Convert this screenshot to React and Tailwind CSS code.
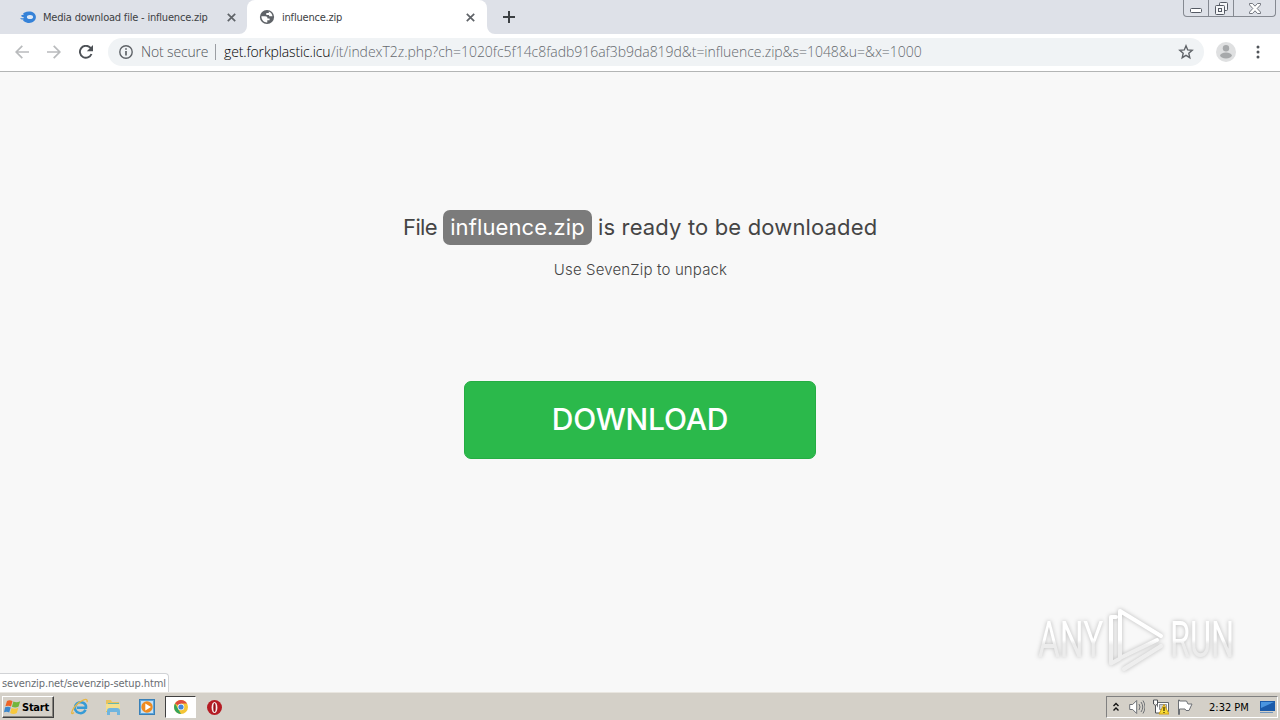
import React from 'react';

function TabClose() {
  return (
    <svg className="h-[9px] w-[9px] shrink-0" viewBox="0 0 9 9" fill="none" stroke="#5f6368" strokeWidth="1.7">
      <path d="M.8.8l7.4 7.4M8.2.8L.8 8.2" />
    </svg>
  );
}

function TabStrip() {
  return (
    <header className="relative flex h-[34px] bg-[#dee1e8]">
      <div className="flex h-full w-[247px] items-center pl-5">
        <svg className="h-4 w-4 shrink-0" viewBox="0 0 16 16">
          <path d="M.3 8.900c1.500.6 3 .4 4-.2L1.600 7.500C.9 6.800 1.200 6 2 5.900l2-.1c-1.200-.4-1-1.500.1-2C9 .9 15.900 2.800 15.900 8.100c0 5.600-7.300 7.600-12 4.100-1-.6-.9-1.400-.2-1.700C1.900 10.700.5 10.100.3 8.900z" fill="#3582d8" />
          <ellipse cx="10" cy="8" rx="3.100" ry="2.100" fill="#dee9f7" />
        </svg>
        <span className="ml-[7px] w-[168px] whitespace-nowrap pt-[2px] text-[11px] tracking-[-0.2px] text-[#3c4043]">Media download file - influence.zip</span>
        <span className="ml-4 flex"><TabClose /></span>
      </div>
      <div className="relative flex h-full w-[240px] items-center rounded-t-lg bg-white pl-3">
        <svg className="absolute -left-2 bottom-0 h-2 w-2" viewBox="0 0 8 8"><path d="M8 0v8H0a8 8 0 0 0 8-8" fill="#fff" /></svg>
        <svg className="absolute -right-2 bottom-0 h-2 w-2" viewBox="0 0 8 8"><path d="M0 0v8h8a8 8 0 0 1-8-8" fill="#fff" /></svg>
        <svg className="h-4 w-4 shrink-0" viewBox="0 0 16 16">
          <circle cx="8" cy="8" r="7.100" fill="#5f6368" />
          <path d="M2.400 7.300h3.800c1.700 0 2.300.8 2.300 2.100h2.100v1.900H8.300v2.200c-2.900.4-6-2.500-5.900-6.200M9.800 2.400v1.500H7.300v2h2.200c.6 0 .8.7.8 1.400h3.200C13.200 4.900 11.800 3.100 9.800 2.400" fill="#fff" />
        </svg>
        <span className="ml-[7px] w-[184px] whitespace-nowrap pt-[2px] text-[11px] tracking-[-0.2px] text-[#3c4043]">influence.zip</span>
        <TabClose />
      </div>
      <div className="flex h-full w-11 items-center justify-center">
        <svg className="h-3 w-3" viewBox="0 0 12 12" stroke="#3c4043" strokeWidth="2"><path d="M6 0v12M0 6h12" /></svg>
      </div>
      {/* Window buttons hang from the top edge */}
      <div className="ml-auto mr-1 flex h-[17px] w-[93px] rounded-b border border-t-0 border-[#858991]">
        <div className="flex w-[25px] items-center justify-center border-r border-[#858991]">
          <svg className="mt-[5px] h-[5px] w-3" viewBox="0 0 12 5"><rect x=".5" y=".5" width="11" height="4" rx="1" fill="#fff" stroke="#555a64" /></svg>
        </div>
        <div className="flex w-[25px] items-center justify-center border-r border-[#858991]">
          <svg className="h-[13px] w-[13px]" viewBox="0 0 13 13" fill="#f5f6f8" stroke="#555a64">
            <rect x="4.500" y=".5" width="8" height="8" rx="1" />
            <rect x=".5" y="3.500" width="9" height="9" rx="1" />
            <rect x="3.500" y="6.500" width="3" height="3" />
          </svg>
        </div>
        <div className="flex flex-1 items-center justify-center">
          <svg className="h-[11px] w-3" viewBox="0 0 12 11">
            <path d="M.5.500h3L6 3.200 8.500.500h3v1.400L8.200 5.500l3.300 3.600v1.400h-3L6 7.800l-2.500 2.700h-3V9.100l3.300-3.600L.5 1.900z" fill="#fff" stroke="#656a73" strokeWidth=".9" />
          </svg>
        </div>
      </div>
    </header>
  );
}

function Toolbar() {
  return (
    <div className="flex h-[38px] items-center border-b border-[#b3b5b5] bg-white pb-px">
      <svg className="ml-[15px] h-[14px] w-[14px]" viewBox="0 0 14 14" fill="none" stroke="#b9bbbd" strokeWidth="1.700"><path d="M14 7H1.500M7.300.8L1.200 7l6.100 6.200" /></svg>
      <svg className="ml-[18px] h-[14px] w-[14px]" viewBox="0 0 14 14" fill="none" stroke="#b9bbbd" strokeWidth="1.700"><path d="M0 7h12.500M6.700.8L12.800 7l-6.100 6.200" /></svg>
      <svg className="ml-[18px] h-[14px] w-[14px]" viewBox="0 0 14 14" fill="none" stroke="#4d5156" strokeWidth="1.900">
        <path d="M12.500 9A6 6 0 1 1 11.300 2.700L12.400 4" />
        <path d="M14 0v6.200H7.800z" fill="#4d5156" stroke="none" />
      </svg>
      <div className="ml-[15px] flex h-7 w-[1096px] items-center rounded-full bg-[#f0f3f5] pl-[11px] text-[14px]">
        <svg className="h-[14px] w-[14px] shrink-0" viewBox="0 0 14 14" fill="none" stroke="#5f6368" strokeWidth="1.400">
          <circle cx="7" cy="7" r="6.200" />
          <path d="M7 6v4.500M7 3.300v1.500" strokeWidth="1.700" />
        </svg>
        <span className="ml-2 w-[68px] whitespace-nowrap pb-px font-['Open_Sans','Noto_Sans',sans-serif] font-light tracking-[-0.15px] text-[#505459]">Not secure</span>
        <span className="ml-[6px] h-4 w-px bg-[#9b9ea3]" />
        <span className="ml-2 w-[107px] whitespace-nowrap pb-px font-['Open_Sans','Noto_Sans',sans-serif] font-light tracking-[-0.13px] text-black">get.forkplastic.icu</span>
        <span className="w-[591px] whitespace-nowrap pb-px font-['Open_Sans','Noto_Sans',sans-serif] font-light tracking-[-0.035px] text-[#65696e]">/it/indexT2z.php?ch=1020fc5f14c8fadb916af3b9da819d&amp;t=influence.zip&amp;s=1048&amp;u=&amp;x=1000</span>
        <svg className="ml-auto mr-[10px] h-4 w-4" viewBox="0 0 16 16" fill="none" stroke="#5f6368" strokeWidth="1.400"><path d="M8 1.800l1.700 4.100 4.500.4-3.400 3 1 4.400L8 11.400l-3.800 2.300 1-4.400-3.400-3 4.500-.4z" /></svg>
      </div>
      <svg className="ml-3 h-5 w-5" viewBox="0 0 20 20">
        <circle cx="10" cy="10" r="10" fill="#dfe0e1" />
        <circle cx="10" cy="6.200" r="3.200" fill="#a7a9ab" />
        <ellipse cx="10" cy="13.500" rx="5.900" ry="2.900" fill="#a7a9ab" />
      </svg>
      <svg className="ml-5 h-[14px] w-1" viewBox="0 0 4 14" fill="#505459"><circle cx="2" cy="2" r="1.500" /><circle cx="2" cy="7" r="1.500" /><circle cx="2" cy="12" r="1.500" /></svg>
    </div>
  );
}

function Watermark() {
  return (
    <div className="absolute bottom-[20px] right-[47px] flex h-[64px] w-[195px] items-center justify-between font-['Roboto','Liberation_Sans',sans-serif] text-[50px] leading-[64px] drop-shadow-[0_0_2px_rgba(0,0,0,0.25)]">
      <span className="w-[97px] shrink-0 origin-left scale-x-[0.670] whitespace-nowrap bg-linear-to-b from-white from-50% to-[#ececec] to-56% bg-clip-text text-transparent">ANY</span>
      <svg className="absolute left-[70px] top-0 h-[64px] w-[60px]" viewBox="0 0 60 64" fill="none" strokeWidth="4" strokeLinejoin="round" strokeLinecap="round">
        <defs>
          <linearGradient id="play-fade" x1="0" y1="0" x2="0" y2="64" gradientUnits="userSpaceOnUse">
            <stop offset=".5" stopColor="#fff" />
            <stop offset=".58" stopColor="#eee" />
          </linearGradient>
        </defs>
        <path d="M8 9H3v46.500l9-5M12 50V3l41 25M12 50l37-18M16 61l37-23" stroke="url(#play-fade)" />
      </svg>
      <span className="w-[97px] shrink-0 origin-right scale-x-[0.650] whitespace-nowrap bg-linear-to-b from-white from-50% to-[#ececec] to-56% bg-clip-text text-right text-transparent">RUN</span>
    </div>
  );
}

function Page() {
  return (
    <main className="relative flex h-[620px] flex-col items-center bg-[#f8f8f8] pt-[138px] font-['Inter','Lato',sans-serif]">
      <h1 className="flex h-[35px] items-center whitespace-nowrap text-[22px] text-[#454545]">
        <span className="w-10 tracking-[-0.6px]">File</span>
        <span className="flex h-[35px] w-[149px] items-center justify-center rounded-[7px] bg-[#7b7b7b] tracking-[0.1px] text-white">influence.zip</span>
        <span className="ml-[6px] w-[279px] tracking-[0.15px]">is ready to be downloaded</span>
      </h1>
      <p className="mt-[14px] whitespace-nowrap pl-px text-[15px] font-light leading-[22px] tracking-[0.15px] text-[#454545]">Use SevenZip to unpack</p>
      <button className="mt-[100px] flex h-[78px] w-[352px] items-center justify-center rounded-[7px] border border-[#25ad43] bg-[#2bb94b] pb-px text-[30px] font-medium tracking-[-0.2px] text-white">DOWNLOAD</button>
      <div className="absolute bottom-0 left-0 flex h-[19px] w-[169px] items-center rounded-tr border-r border-t border-[#d1d3d6] bg-white pl-[2px] font-['DejaVu_Sans_Condensed','DejaVu_Sans',sans-serif] text-[11px] text-[#696d72]">
        <span className="whitespace-nowrap pt-[2px] tracking-[-0.1px]">sevenzip.net/sevenzip-setup.html</span>
      </div>
      <Watermark />
    </main>
  );
}

function WindowsFlag() {
  return (
    <svg className="h-4 w-[17px] shrink-0" viewBox="0 0 17 16">
      <path d="M3 2c2-1.300 4-.8 5.500.2L7 7.500C5.400 6.500 3.500 6.300 1.400 7.300z" fill="#ed6427" />
      <path d="M9.400 2.600c2.300 1 4.400.9 6.800-.3L14.600 7.600c-2.200 1.300-4.300 1.200-6.700.2z" fill="#72b63c" />
      <path d="M1.100 8.300c2.200-1 4-.8 5.600.2l-1.500 5.100C3.600 12.500 1.800 12.500 0 13.300z" fill="#3c87cc" />
      <path d="M7.600 8.900c2.200 1.100 4.400 1 6.700-.2L12.800 14c-2.200 1.300-4.500 1.200-6.700.1z" fill="#f8c83d" />
    </svg>
  );
}

function Taskbar() {
  return (
    <footer className="flex h-7 items-center border-t border-[#e9e6e0] bg-[#d4d0c8] pt-px">
      <button className="ml-[2px] flex h-[22px] w-[52px] items-center border border-b-[#404040] border-l-white border-r-[#404040] border-t-white pl-px text-[11px] font-bold text-black shadow-[inset_-1px_-1px_0_#87847e]">
        <WindowsFlag />
        <span className="ml-px pt-[2px] tracking-[-0.25px]">Start</span>
      </button>
      <svg className="ml-[17px] h-[18px] w-[18px]" viewBox="0 0 18 18" fill="none">
        <path d="M14.500 11.800C13.300 14.500 10.700 15.600 8 14.900c-3.500-.9-5-4.400-3.500-7.500C6 4.300 9.700 3.300 12.500 4.900c2.300 1.400 2.800 3.100 2.500 4.900H6" stroke="#369bd6" strokeWidth="2.500" />
        <path d="M3 14.500C-.5 18 0 13 4.400 8 9.500 2.300 17.500-1.300 16 4.200" stroke="#e8b744" strokeWidth="1.300" />
      </svg>
      <svg className="ml-[15px] h-[18px] w-[18px]" viewBox="0 0 18 18">
        <path d="M2 2h5l1 2h7v10H2z" fill="#e9c35d" />
        <path d="M4 5h11v3H4z" fill="#67b8a9" />
        <path d="M2 6h14v7H2z" fill="#f4df8d" />
        <path d="M3 17v-4q0-3 3-3h7q3 0 3 3v4h-3v-3H6v3z" fill="#6fb5df" />
      </svg>
      <svg className="ml-[17px] h-4 w-4" viewBox="0 0 16 16">
        <rect x=".5" y=".5" width="15" height="15" fill="#5ba5dc" stroke="#3980b7" />
        <path d="M2 2h12v12H2z" fill="#c7e1f4" />
        <circle cx="8" cy="8" r="5.700" fill="#ee8b20" />
        <path d="M6.300 4.500L12 8l-5.700 3.500z" fill="#fff" />
      </svg>
      <div className="ml-[10px] flex h-[22px] w-[31px] items-center justify-center border border-b-white border-l-[#404040] border-r-white border-t-[#404040] bg-white">
        <svg className="h-[14px] w-[14px]" viewBox="0 0 14 14">
          <circle cx="7" cy="7" r="7" fill="#f4c536" />
          <path d="M7 7L1 3.500A7 7 0 0 1 13 3.500H7z" fill="#df4d3e" />
          <path d="M1 3.500L4.200 9 7 14A7 7 0 0 1 1 3.500" fill="#35a45b" />
          <circle cx="7" cy="7" r="3.300" fill="#fff" />
          <circle cx="7" cy="7" r="2.600" fill="#4386db" />
        </svg>
      </div>
      <svg className="ml-[11px] h-[15px] w-[15px]" viewBox="0 0 15 15">
        <circle cx="7.500" cy="7.500" r="7.500" fill="#b51c24" />
        <ellipse cx="7.500" cy="7.500" rx="2.900" ry="5.600" fill="#f9eeee" />
        <ellipse cx="7.500" cy="7.500" rx="1.200" ry="4.500" fill="#981018" />
      </svg>
      <div className="ml-auto mr-[2px] flex h-[22px] w-[172px] items-center border border-b-white border-l-[#808080] border-r-white border-t-[#808080] pl-[5px]">
        <svg className="h-[10px] w-2 shrink-0" viewBox="0 0 8 10" fill="none" stroke="#111" strokeWidth="1.400"><path d="M1.500 4L4 1.500 6.500 4M1.500 8.500L4 6l2.500 2.500" /></svg>
        <svg className="ml-[9px] h-4 w-4 shrink-0" viewBox="0 0 16 16" fill="none" stroke="#6d7075">
          <path d="M.7 5.500h3l4-4v13l-4-4h-3z" fill="#fff" />
          <path d="M10 5q2 3 0 6M12 3q3.500 5 0 10M14 1.500q4 6.500 0 13" />
        </svg>
        <svg className="ml-2 h-4 w-4 shrink-0" viewBox="0 0 16 16">
          <path d="M4.500 3.500h11v9h-11z" fill="#fff" stroke="#65696e" />
          <path d="M6.500 5.500h7v5h-7z" fill="#c9cdd1" stroke="#929497" />
          <path d="M.5 1v4l2 1.500V14H8M.5 1h4v4l-2 1.500" fill="#fff" stroke="#4d5055" />
          <path d="M11 5.500l5 9.500H6z" fill="#f7dc35" stroke="#d39e14" />
          <path d="M11 8v4m0 1v1" stroke="#463500" strokeWidth="1.300" />
        </svg>
        <svg className="ml-2 h-4 w-4 shrink-0" viewBox="0 0 16 16" fill="#fff" stroke="#6d7075"><path d="M1.500 1v14.500h1V10H8l1 1.500h3L15 5h-4L9.500 2h-7V1z" /></svg>
        <span className="ml-4 w-[40px] whitespace-nowrap pt-[2px] text-[11px] text-black">2:32 PM</span>
        <svg className="ml-[10px] h-[14px] w-4 shrink-0" viewBox="0 0 16 14">
          <path d="M1 1h15v10H1z" fill="#1b5baa" />
          <path d="M2 2h13L2 8z" fill="#4a95df" />
          <path d="M1 12h13v1H1z" fill="#7195bd" />
        </svg>
      </div>
    </footer>
  );
}

export default function App() {
  return (
    <div className="h-[720px] w-[1280px] overflow-hidden bg-white font-['DejaVu_Sans_Condensed','DejaVu_Sans',sans-serif]">
      <TabStrip />
      <Toolbar />
      <Page />
      <Taskbar />
    </div>
  );
}
